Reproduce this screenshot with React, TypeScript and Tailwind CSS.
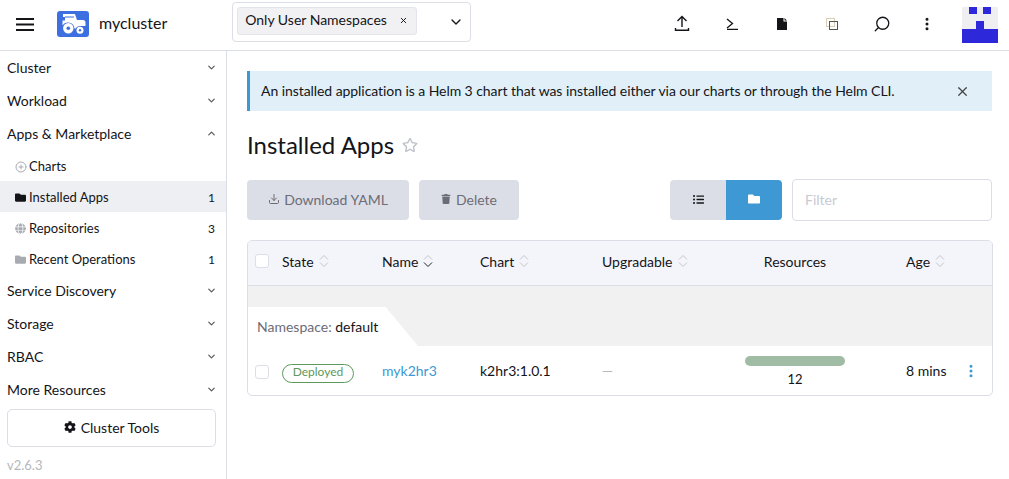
import React from 'react';
import { ChevronDown, ChevronUp, CirclePlus, Download, MoreVertical, Search, X } from 'lucide-react';
import { FaCog, FaFolder, FaGlobe, FaListUl, FaRegStar, FaTrash } from 'react-icons/fa';

const FONT = "font-['Lato','Liberation_Sans',sans-serif]";

const Logo = () => (
  <svg width="32" height="26" viewBox="0 0 32 26" className="shrink-0">
    <rect width="32" height="26" rx="3" fill="#3d6fe0" />
    <path d="M6 3h12l2 6h6c1.500 0 2.500 1 2.500 2.500V15h-5a5 5 0 0 0-5 2.500h-1a6.500 6.500 0 0 0-12-3V9.500H8V6H6z" fill="#fff" />
    <rect x="8" y="5.500" width="9" height="1" fill="#3d6fe0" />
    <circle cx="11.300" cy="17.300" r="5.200" fill="#fff" />
    <circle cx="11.300" cy="17.300" r="1.800" fill="#3d6fe0" />
    <circle cx="23" cy="19.300" r="3.500" fill="#fff" />
    <circle cx="23" cy="19.300" r="1.200" fill="#3d6fe0" />
  </svg>
);

const Sort = ({ active }: { active?: boolean }) => (
  <svg width="10" height="14" viewBox="0 0 10 14" fill="none" strokeWidth="1" className="shrink-0">
    <path d="M1 5.500 5 1.500l4 4" stroke="#c4c6cc" />
    <path d="M1 8.500l4 4 4-4" stroke={active ? '#222' : '#c4c6cc'} />
  </svg>
);

const Group = ({ label, open }: { label: string; open?: boolean }) => (
  <div className="flex items-center justify-between h-[33px] pl-[7px] pr-[9px] text-[14px] text-[#141419]">
    <span>{label}</span>
    {open ? <ChevronUp size={11} strokeWidth={2.5} className="text-[#555]" /> : <ChevronDown size={11} strokeWidth={2.5} className="text-[#555]" />}
  </div>
);

const Sub = ({ icon, label, count, active }: { icon: React.ReactNode; label: string; count?: number; active?: boolean }) => (
  <div className={`flex items-center h-[31px] pt-[2px] pl-[15px] pr-[11px] text-[13px] text-[#141419] ${active ? 'bg-[#edeff3]' : ''}`}>
    <span className="w-[14px] flex items-center shrink-0">{icon}</span>
    <span className="flex-1">{label}</span>
    {count !== undefined && <span className="text-[12px]">{count}</span>}
  </div>
);

const Sidebar = () => (
  <aside className="w-[227px] shrink-0 border-r border-[#dcdee7] flex flex-col">
    <Group label="Cluster" />
    <Group label="Workload" />
    <Group label="Apps & Marketplace" open />
    <Sub icon={<CirclePlus size={12} className="text-[#a9abb3]" />} label="Charts" />
    <Sub icon={<FaFolder size={11} className="text-[#141419]" />} label="Installed Apps" count={1} active />
    <Sub icon={<FaGlobe size={11} className="text-[#a9abb3]" />} label="Repositories" count={3} />
    <Sub icon={<FaFolder size={11} className="text-[#a9abb3]" />} label="Recent Operations" count={1} />
    <Group label="Service Discovery" />
    <Group label="Storage" />
    <Group label="RBAC" />
    <Group label="More Resources" />
    <div className="pl-[7px] pr-[10px] pt-[3px]">
      <button className="w-full h-[38px] pb-[2px] border border-[#dcdee7] rounded-[5px] flex items-center justify-center gap-[5px] text-[14px] text-[#141419]">
        <FaCog size={12} /> Cluster Tools
      </button>
      <div className="mt-[9px] text-[13px] text-[#b6b8be]">v2.6.3</div>
    </div>
  </aside>
);

const HeaderIcon = ({ children }: { children: React.ReactNode }) => (
  <div className="w-[50px] flex items-center justify-center">{children}</div>
);

const Header = () => (
  <header className="h-[51px] shrink-0 border-b border-[#dcdee7] flex items-center pb-[3px]">
    <svg width="18" height="14" viewBox="0 0 18 14" className="ml-[16px] mt-[2px]">
      <path d="M0 1h18M0 6.500h18M0 12h18" stroke="#141419" strokeWidth="2" />
    </svg>
    <div className="ml-[23px]"><Logo /></div>
    <span className="ml-[10px] text-[16px] text-[#141419] mb-[2px]">mycluster</span>
    <div className="ml-[65px] w-[239px] h-[40px] mb-[4px] border border-[#dcdee7] rounded-[4px] flex items-center pl-[4px] pr-[6px] justify-between">
      <div className="h-[28px] w-[180px] mb-[2px] bg-[#f1f1f3] border border-[#e4e5ea] rounded-[3px] flex items-center pl-[7px] pb-[2px] gap-[12px] text-[14px] text-[#141419]">
        Only User Namespaces <X size={9} strokeWidth={2.5} className="mt-[2px]" />
      </div>
      <ChevronDown size={16} strokeWidth={2} className="text-[#141419]" />
    </div>
    <div className="ml-auto flex items-center pr-[11px]">
      <HeaderIcon>
        <svg width="16" height="17" viewBox="0 0 16 17" fill="none" stroke="#141419" strokeWidth="1.400">
          <path d="M8 12V1.500M3.500 6 8 1.500 12.500 6M1.500 13v2.300h13V13" />
        </svg>
      </HeaderIcon>
      <HeaderIcon>
        <svg width="12" height="12" viewBox="0 0 12 12" fill="none" stroke="#141419" strokeWidth="1.300">
          <path d="M1 1l5.500 4.500L1 10M1 11.400h11" />
        </svg>
      </HeaderIcon>
      <HeaderIcon>
        <svg width="10" height="12" viewBox="0 0 10 12"><path d="M0 0h6.500v3.500H10V12H0zM7.500 0 10 2.500H7.500z" fill="#141419" /></svg>
      </HeaderIcon>
      <HeaderIcon>
        <svg width="12" height="12" viewBox="0 0 12 12" fill="none">
          <rect x="0.500" y="0.500" width="8" height="8" stroke="#b59a6a" strokeDasharray="1 1" />
          <rect x="3.500" y="3.500" width="8" height="8" stroke="#555" />
        </svg>
      </HeaderIcon>
      <HeaderIcon>
        <Search size={18} strokeWidth={1.700} className="text-[#141419] -scale-x-100" />
      </HeaderIcon>
      <div className="w-[40px] flex justify-center">
        <MoreVertical size={16} strokeWidth={2.500} className="text-[#141419]" />
      </div>
      <svg width="36" height="36" viewBox="0 0 36 36" className="ml-[15px] mt-[3px]">
        <rect width="36" height="36" fill="#efeff1" />
        <rect x="7" y="0" width="8" height="7" fill="#2d28da" />
        <rect x="21" y="0" width="8" height="7" fill="#2d28da" />
        <rect x="14" y="14" width="8" height="8" fill="#2d28da" />
        <rect x="0" y="22" width="36" height="14" fill="#2d28da" />
      </svg>
    </div>
  </header>
);

const COLS = 'grid grid-cols-[34px_100px_98px_122px_143px_161px_55px_1fr] items-center';

const Th = ({ label, active }: { label: string; active?: boolean }) => (
  <div className="flex items-center gap-[5px] text-[14px] text-[#141419]">{label}<Sort active={active} /></div>
);

const Table = () => (
  <div className="mt-[19px] w-[746px] border border-[#dcdee7] rounded-[5px] overflow-hidden">
    <div className={`${COLS} h-[45px] pb-[4px] bg-[#f4f5fa] border-b border-[#dcdee7]`}>
      <div className="pl-[7px]"><div className="w-[14px] h-[14px] bg-white border border-[#dcdee7] rounded-[3px]" /></div>
      <Th label="State" />
      <Th label="Name" active />
      <Th label="Chart" />
      <Th label="Upgradable" />
      <div className="w-[100px] text-center text-[14px] text-[#141419]">Resources</div>
      <Th label="Age" />
      <div />
    </div>
    <div className="bg-[#f1f1f1] h-[60px] flex items-end">
      <div className="h-[39px] w-[170px] bg-white flex items-center pl-[9px] text-[14px] [clip-path:polygon(0_0,81%_0,100%_100%,0_100%)]">
        <span className="text-[#6c6c76]">Namespace:&nbsp;</span><span className="text-[#141419]">default</span>
      </div>
    </div>
    <div className={`${COLS} h-[49px]`}>
      <div className="pl-[7px] pt-[2px]"><div className="w-[14px] h-[14px] border border-[#dcdee7] rounded-[3px]" /></div>
      <div><span className="inline-flex items-center justify-center w-[72px] h-[19px] pb-[2px] border border-[#5d995d] rounded-full text-[12px] text-[#5d995d]">Deployed</span></div>
      <div className="text-[14px] text-[#3d98d3]">myk2hr3</div>
      <div className="text-[14px] text-[#141419]">k2hr3:1.0.1</div>
      <div className="text-[14px] text-[#b6b8be]">—</div>
      <div className="w-[100px] flex flex-col items-center pt-[4px]">
        <div className="w-[100px] h-[10px] rounded-full bg-[#a0bca5]" />
        <span className="text-[13px] text-[#141419] mt-[4px]">12</span>
      </div>
      <div className="text-[14px] text-[#141419]">8 mins</div>
      <MoreVertical size={16} strokeWidth={2.500} className="text-[#3d98d3] ml-[2px]" />
    </div>
  </div>
);

const Main = () => (
  <main className="flex-1 pl-[20px] pr-[17px] pt-[20px]">
    <div className="h-[40px] w-[745px] bg-[#e1f0f8] border-l-[3px] border-[#3d98d3] flex items-center justify-between pl-[11px] pb-[2px] pr-[22px] text-[14px] tracking-[-0.065px] text-[#141419]">
      An installed application is a Helm 3 chart that was installed either via our charts or through the Helm CLI.
      <X size={15} strokeWidth={2} className="text-[#444] mt-[2px]" />
    </div>
    <div className="mt-[16px] h-[36px] flex items-center gap-[8px]">
      <h1 className="text-[24px] text-[#141419]">Installed Apps</h1>
      <FaRegStar size={16} className="text-[#bdbfc8]" />
    </div>
    <div className="mt-[16px] w-[745px] flex items-center">
      <button className="w-[162px] h-[40px] pb-[2px] rounded-[4px] bg-[#dcdee7] text-[14px] text-[#6c6c76] flex items-center justify-center gap-[4px]"><Download size={12} />Download YAML</button>
      <button className="ml-[10px] w-[100px] h-[40px] pb-[2px] rounded-[4px] bg-[#dcdee7] text-[14px] text-[#6c6c76] flex items-center justify-center gap-[5px]"><FaTrash size={10} />Delete</button>
      <div className="ml-auto flex h-[40px] rounded-[4px] overflow-hidden">
        <div className="w-[56px] pb-[2px] bg-[#dcdee7] flex items-center justify-center"><FaListUl size={11} className="text-[#141419]" /></div>
        <div className="w-[56px] pb-[2px] bg-[#3d98d3] flex items-center justify-center"><FaFolder size={12} className="text-white" /></div>
      </div>
      <input placeholder="Filter" className="ml-[10px] w-[200px] h-[42px] px-[12px] pb-[2px] border border-[#dcdee7] rounded-[4px] text-[14px] placeholder:text-[#c9cad2] outline-none" />
    </div>
    <Table />
  </main>
);

export default function App() {
  return (
    <div className={`${FONT} w-[1009px] h-[479px] overflow-hidden bg-white flex flex-col`}>
      <Header />
      <div className="flex flex-1 min-h-0">
        <Sidebar />
        <Main />
      </div>
    </div>
  );
}
